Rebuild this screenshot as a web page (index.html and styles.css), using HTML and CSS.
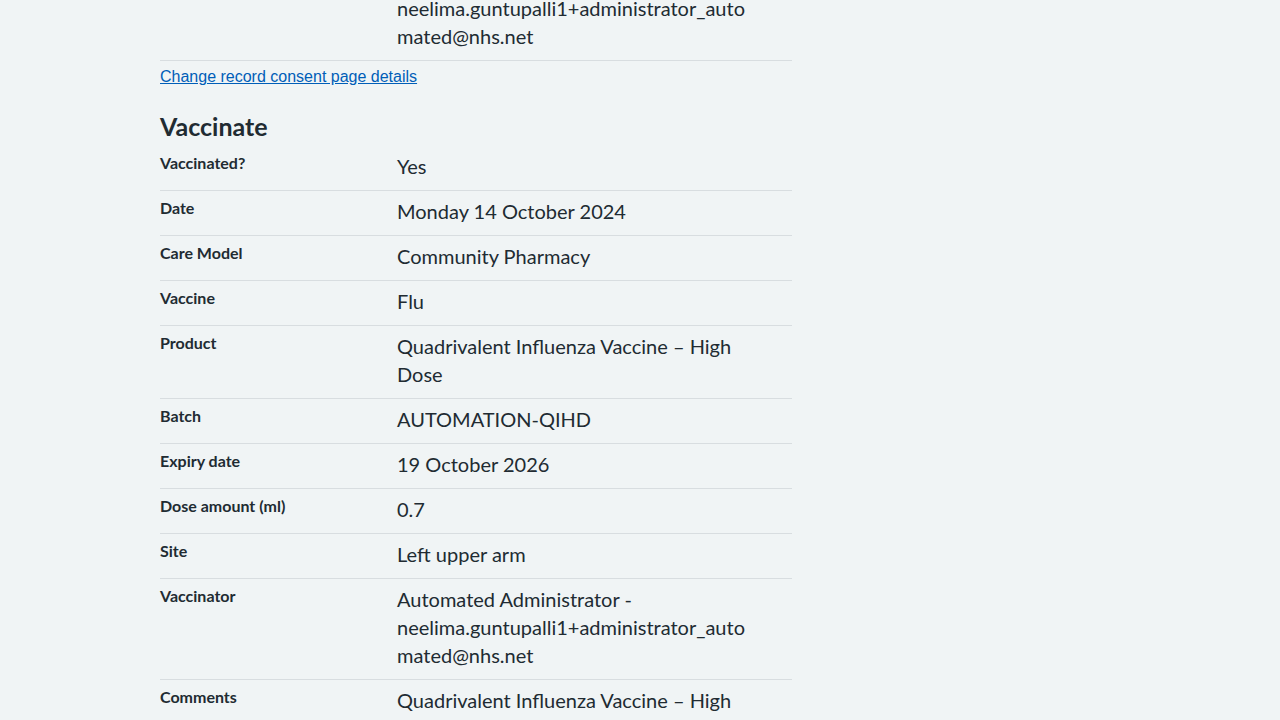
FILE: index.html
```html
<!DOCTYPE html>
<html lang="en">
<head>
<meta charset="utf-8">
<title>Check and confirm</title>
<link rel="stylesheet" href="styles.css">
</head>
<body>
<main class="page">
  <dl class="summary">
    <div class="summary-row">
      <dt class="summary-key">Recorded by</dt>
      <dd class="summary-value">Automated Administrator - neelima.guntupalli1+administrator_auto<wbr>mated@nhs.net</dd>
    </div>
  </dl>
  <p class="change"><a class="change-link" href="#">Change record consent page details</a></p>

  <h2 class="section-title">Vaccinate</h2>
  <dl class="summary">
    <div class="summary-row">
      <dt class="summary-key">Vaccinated?</dt>
      <dd class="summary-value">Yes</dd>
    </div>
    <div class="summary-row">
      <dt class="summary-key">Date</dt>
      <dd class="summary-value">Monday 14 October 2024</dd>
    </div>
    <div class="summary-row">
      <dt class="summary-key">Care Model</dt>
      <dd class="summary-value">Community Pharmacy</dd>
    </div>
    <div class="summary-row">
      <dt class="summary-key">Vaccine</dt>
      <dd class="summary-value">Flu</dd>
    </div>
    <div class="summary-row">
      <dt class="summary-key">Product</dt>
      <dd class="summary-value">Quadrivalent Influenza Vaccine – High<br>Dose</dd>
    </div>
    <div class="summary-row">
      <dt class="summary-key">Batch</dt>
      <dd class="summary-value">AUTOMATION-QIHD</dd>
    </div>
    <div class="summary-row">
      <dt class="summary-key">Expiry date</dt>
      <dd class="summary-value">19 October 2026</dd>
    </div>
    <div class="summary-row">
      <dt class="summary-key">Dose amount (ml)</dt>
      <dd class="summary-value">0.7</dd>
    </div>
    <div class="summary-row">
      <dt class="summary-key">Site</dt>
      <dd class="summary-value">Left upper arm</dd>
    </div>
    <div class="summary-row">
      <dt class="summary-key">Vaccinator</dt>
      <dd class="summary-value">Automated Administrator - neelima.guntupalli1+administrator_auto<wbr>mated@nhs.net</dd>
    </div>
    <div class="summary-row">
      <dt class="summary-key">Comments</dt>
      <dd class="summary-value">Quadrivalent Influenza Vaccine – High<br>Dose</dd>
    </div>
  </dl>
</main>
</body>
</html>
```

FILE: styles.css
```css
html, body {
  margin: 0;
  padding: 0;
}

body {
  background: #f0f4f5;
  color: #212b32;
  font-family: "Lato", "Liberation Sans", sans-serif;
}

.page {
  width: 632px;
  margin: -40px 0 0 160px;
}

.summary {
  margin: 0;
}

.summary-row {
  display: grid;
  grid-template-columns: 237px 1fr;
  border-bottom: 1px solid #d8dde0;
}

.summary-key {
  margin: 0;
  padding: 7px 0 0;
  font-weight: 700;
  font-size: 16px;
  line-height: 20px;
}

.summary-value {
  margin: 0;
  padding: 6px 0 10px;
  font-size: 20px;
  line-height: 28px;
}

.change {
  margin: 4px 0 0;
  font-family: "Liberation Sans", Arial, sans-serif;
  font-size: 16px;
  line-height: 24px;
}

.change-link {
  color: #005eb8;
  text-decoration: underline;
}

.section-title {
  margin: 21px 0 4px;
  font-size: 25px;
  line-height: 32px;
  font-weight: 700;
}
```
